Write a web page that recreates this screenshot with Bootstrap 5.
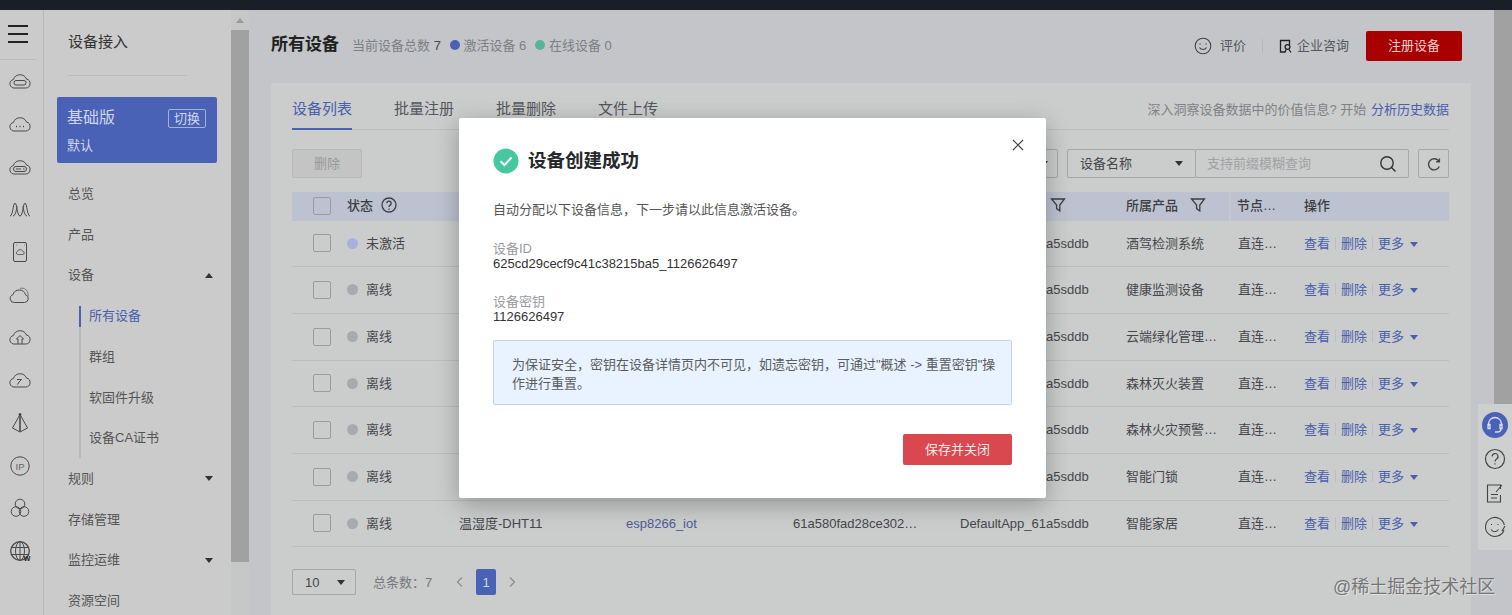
<!DOCTYPE html>
<html lang="zh-CN">
<head>
<meta charset="UTF-8">
<title>所有设备</title>
<link href="https://cdn.jsdelivr.net/npm/bootstrap@5.3.3/dist/css/bootstrap.min.css" rel="stylesheet">
<style>
html, body { height: 615px; overflow: hidden; }
body { font-family: "Liberation Sans", "Noto Sans CJK SC", sans-serif; font-size: 13px; color: #3a3c40; background: #c3c5c9; }
a { text-decoration: none; }
.top-strip { height: 10px; background: #1a1e29; }
.shell { height: 605px; }

/* icon rail */
.rail { width: 44px; flex: none; background: #cbcbcb; border-right: 1px solid #b6b6b6; }
.rail-menu { height: 50px; margin-right: 7px; border-bottom: 1px solid #bcbcbc; padding: 15px 0 0 8px; }
.rail-menu span { display: block; width: 20px; height: 2px; background: #222; margin-bottom: 6px; }
.rail-item { height: 42.7px; padding-left: 9px; display: flex; align-items: center; }
.rail-item svg { width: 22px; height: 22px; fill: none; stroke: #4a4a4a; stroke-width: 1; }

/* second menu */
.side { width: 187px; flex: none; background: #cbcbcb; padding: 0 14px 0 13px; }
.side-title { height: 66px; margin: 0 30px 0 11px; padding-top: 21px; font-size: 15px; color: #333; border-bottom: 1px solid #bdbdbd; line-height: 22px; }
.plan-box { height: 66px; margin-top: 21px; background: #4a62b6; border-radius: 2px; color: #cfd6ec; padding: 10px 11px 10px 10px; }
.plan-name { font-size: 16px; line-height: 22px; }
.plan-switch { border: 1px solid #a3afdc; border-radius: 2px; font-size: 13px; line-height: 17px; padding: 0 5px; }
.plan-sub { margin-top: 8px; line-height: 18px; }
.side-nav { margin-top: 10.5px; }
.side-link { height: 40.7px; padding-left: 11px; padding-right: 4px; display: flex; align-items: center; justify-content: space-between; color: #555; }
.side-sub { margin-left: 22px; border-left: 2px solid #b9b9b9; }
.side-sub .side-link { padding-left: 8px; height: 40.7px; margin-left: -2px; border-left: 2px solid transparent; }
.side-sub .side-link.is-on { height: 21px; margin-top: 10px; margin-bottom: 9.7px; color: #4a5fae; border-left-color: #4a62b6; }
.caret-up, .caret-down { width: 0; height: 0; border-left: 4.5px solid transparent; border-right: 4.5px solid transparent; }
.caret-up { border-bottom: 5px solid #333; }
.caret-down { border-top: 5px solid #333; }
.bar-track { width: 18px; flex: none; background: #c6c7c7; }
.bar-top { height: 20px; display: flex; align-items: center; justify-content: center; }
.bar-top i { width: 0; height: 0; border-left: 4px solid transparent; border-right: 4px solid transparent; border-bottom: 5px solid #999; }
.bar-thumb { height: 532px; background: #a1a1a1; }

/* content */
.main-wrap { flex: 1; min-width: 0; padding: 0 23px 0 22px; }
.page-head { height: 73px; padding-bottom: 2px; }
.page-title { font-size: 17px; font-weight: 700; color: #222; margin: 0; }
.page-stat { color: #7d7f84; margin-left: 13px; }
.page-stat + .page-stat { margin-left: 9px; }
.page-stat b { font-weight: 400; color: #45474b; }
.dot { display: inline-block; width: 10px; height: 10px; border-radius: 50%; }
.dot-blue { background: #4a62b6; }
.dot-green { background: #57b496; }
.head-tool { color: #55575b; }
.head-sep { width: 1px; height: 14px; background: #b4b6ba; margin: 0 16px; }
.btn-reg { width: 96px; height: 30px; margin-left: 17px; margin-right: 9px; padding: 0; font-size: 13px; color: #e3cfcf; background: #a80000; border: 0; border-radius: 2px; }
.panel-box { width: 1200px; height: 532px; background: #cbcccc; padding: 0 22px 0 21px; }
.tab-row { height: 47px; border-bottom: 1px solid #bcbdbe; }
.tab-row .nav-link { padding: 0; margin-right: 42px; height: 47px; line-height: 51px; font-size: 15px; color: #55575b; border-bottom: 2px solid transparent; }
.tab-row .nav-link.active { color: #4a5fae; border-bottom-color: #4a62b6; }
.tab-hint { color: #808285; padding-top: 17px; }
.tab-hint a { color: #4a5fae; margin-left: 1px; }
.tool-row { margin-top: 19px; height: 29px; }
.btn-off { --bs-btn-disabled-bg: #c4c4c4; --bs-btn-disabled-border-color: #b8b8b8; --bs-btn-disabled-color: #999; --bs-btn-disabled-opacity: 1; width: 70px; height: 29px; padding: 0; font-size: 13px; border-radius: 2px; }
.pick-box { height: 29px; border: 1px solid #a7a7a7; border-radius: 2px; padding: 0 12px; display: flex; align-items: center; justify-content: space-between; color: #45474b; background: transparent; }
.pick-back { width: 80px; margin-right: 9px; padding-right: 9px; }
.pick-name { width: 129px; }
.search-box { width: 214px; height: 29px; margin-left: -1px; border: 1px solid #a7a7a7; border-radius: 2px; padding: 0 11px; display: flex; align-items: center; justify-content: space-between; color: #a1a2a3; }
.search-box svg { width: 18px; height: 18px; fill: none; stroke: #333; stroke-width: 1.4; }
.btn-reload { width: 31px; height: 29px; margin-left: 9px; padding: 0; border: 1px solid #a7a7a7; border-radius: 2px; background: transparent; display: flex; align-items: center; justify-content: center; }
.btn-reload svg { width: 14px; height: 14px; fill: none; stroke: #444; stroke-width: 1.4; }

.dev-table { table-layout: fixed; width: 1157px; margin: 14px 0 0; --bs-table-bg: transparent; --bs-table-color: #45474b; font-size: 13px; }
.dev-table th { height: 28px; padding: 0 12px 0 8px; background: #bcc2cf; font-weight: 500; color: #3c3e42; border-bottom: 1px solid #c0c1c3; vertical-align: middle; white-space: nowrap; }
.dev-table td { height: 46.7px; padding: 0 12px 0 8px; border-bottom: 1px solid #bcbdbe; vertical-align: middle; }
.dev-table th.gap-left { border-left: 2px solid #c5c8ce; padding-left: 6px; }
.check-box { display: block; width: 18px; height: 18px; margin-left: 13px; border: 1px solid #9c9c9c; border-radius: 2px; }
.state-dot { display: inline-block; width: 11px; height: 11px; border-radius: 50%; background: #a8aaae; margin-right: 8px; vertical-align: -1px; }
.state-new { background: #a7b1dd; }
.th-icon { width: 16px; height: 16px; fill: none; stroke: #3c3e42; stroke-width: 1.3; margin-left: 8px; vertical-align: -3px; }
.filter-icon { margin-left: 12px; }
.dev-link { color: #4f5a94; }
.op-links { white-space: nowrap; color: #4a5fae; }
.op-sep { display: inline-block; width: 1px; height: 12px; background: #bcbdc2; margin: 0 5px; vertical-align: -1px; }
.caret-blue { display: inline-block; margin-left: 6px; width: 0; height: 0; border-left: 4.5px solid transparent; border-right: 4.5px solid transparent; border-top: 5px solid #4a5fae; vertical-align: 1px; }
.pager-row { margin-top: 22px; }
.pager-size { width: 64px; height: 26px; border: 1px solid #a7a7a7; border-radius: 2px; padding: 0 10px 0 12px; display: flex; align-items: center; justify-content: space-between; color: #45474b; }
.pager-total { margin-left: 17px; color: #77797c; width: 81px; }
.pager-row svg { width: 12px; height: 12px; fill: none; stroke: #8a8c90; stroke-width: 1.2; }
.pager-now { width: 20px; height: 26px; margin: 0 10px; border-radius: 2px; background: #4a62b6; color: #cfd6ec; display: flex; align-items: center; justify-content: center; }
.side-scroll { width: 18px; flex: none; }
.side-scroll div { height: 394px; background: #a1a1a1; }

/* over the page */
.dialog-box { position: absolute; left: 459px; top: 118px; width: 587px; height: 380px; padding: 30px 34px 0; border: 0; border-radius: 2px; box-shadow: 0 6px 24px rgba(0,0,0,.28); background: #fff; color: #555; z-index: 5; }
.dialog-close { position: absolute; right: 21px; top: 20px; width: 14px; height: 14px; padding: 0; border: 0; background: none; display: flex; }
.dialog-close svg { width: 14px; height: 14px; stroke: #444; stroke-width: 1.2; fill: none; }
.dialog-head { height: 26px; }
.dialog-head svg { width: 26px; height: 26px; margin-right: 9px; }
.dialog-title { font-size: 18.5px; font-weight: 700; color: #26282c; margin: 0; }
.dialog-line { margin: 26px 0 0; line-height: 20px; }
.info-label { color: #9a9c9f; line-height: 15px; }
.info-val { color: #333; line-height: 15px; }
.info-block { margin-top: 21px; }
.info-block + .info-block { margin-top: 23px; }
.dialog-note { height: 65px; margin: 16px 0 0; padding: 14px 0 0 18px; line-height: 19px; color: #5a5c60; background: #e8f3ff; border: 1px solid #c9d3f1; border-radius: 2px; white-space: nowrap; }
.dialog-foot { margin-top: 29px; }
.btn-save { width: 109px; height: 31px; padding: 0; font-size: 13px; color: #fbe8e9; background: #d9474f; border: 0; border-radius: 2px; }
.help-float { position: absolute; left: 1478px; top: 404px; width: 34px; height: 146px; background: #cecfcf; padding-top: 8px; z-index: 3; }
.help-float svg { display: block; width: 26px; height: 26px; margin: 0 0 8px 4px; fill: none; stroke: #444; stroke-width: 1; }
.mark-text { position: absolute; left: 1333px; top: 575px; font-size: 18px; line-height: 24px; color: rgba(85,85,85,.75); text-shadow: 1px 1px 0 rgba(235,235,235,.7); white-space: nowrap; z-index: 2; }
</style>
</head>
<body>
<div class="top-strip"></div>
<div class="shell d-flex">
  <div class="rail">
    <div class="rail-menu"><span></span><span></span><span></span></div>
    <div class="rail-list">
      <div class="rail-item"><svg viewBox="0 0 22 22"><path d="M6 18h10.5a4.5 4.5 0 0 0 1-8.9A7 7 0 0 0 4.4 9.5 4.3 4.3 0 0 0 6 18z"/><rect x="5" y="10.5" width="12" height="4.5" rx="2"/></svg></div>
      <div class="rail-item"><svg viewBox="0 0 22 22"><path d="M6 18h10.5a4.5 4.5 0 0 0 1-8.9A7 7 0 0 0 4.4 9.5 4.3 4.3 0 0 0 6 18z"/><path d="M7 13.5h1M10.5 13.5h1M14 13.5h1" stroke-width="1.5"/></svg></div>
      <div class="rail-item"><svg viewBox="0 0 22 22"><path d="M6 18h10.5a4.5 4.5 0 0 0 1-8.9A7 7 0 0 0 4.4 9.5 4.3 4.3 0 0 0 6 18z"/><rect x="4.5" y="10.5" width="13" height="5" rx="2.5"/><path d="M7 13h5M14 13h1.5"/></svg></div>
      <div class="rail-item"><svg viewBox="0 0 22 22"><path d="M1 18c3 0 3-13 5-13s2 13 5 13 3-13 5-13 2 13 5 13M4 18c3 0 4-10 4-10M18 18c-3 0-4-10-4-10"/></svg></div>
      <div class="rail-item"><svg viewBox="0 0 22 22"><rect x="4.5" y="1.5" width="13" height="19" rx="1.5"/><path d="M8.5 13.5h5a1.6 1.6 0 0 0 .2-3.2 2.8 2.8 0 0 0-5.3.3 1.5 1.5 0 0 0 .1 2.9z" stroke-width=".8"/><path d="M7 4h.5M15 4h.5" stroke-width="1.2"/></svg></div>
      <div class="rail-item"><svg viewBox="0 0 22 22"><path d="M5.5 18.5h10a4 4 0 0 0 1-7.8A6.5 6.5 0 0 0 4 10.7a4 4 0 0 0 1.5 7.8z"/><path d="M11 4.5c4-1.5 9 2 8 8" stroke="#777"/></svg></div>
      <div class="rail-item"><svg viewBox="0 0 22 22"><path d="M6 18h10.5a4.5 4.5 0 0 0 1-8.9A7 7 0 0 0 4.4 9.5 4.3 4.3 0 0 0 6 18z"/><path d="M7.5 13l3.5-3.5 3.5 3.5M9 13v5M13 13v5M9 13H7.5M13 13h1.5"/></svg></div>
      <div class="rail-item"><svg viewBox="0 0 22 22"><path d="M6 18h10.5a4.5 4.5 0 0 0 1-8.9A7 7 0 0 0 4.4 9.5 4.3 4.3 0 0 0 6 18z"/><path d="M8 10.5h4.5L10 13M10 13l-1.5 2.5"/></svg></div>
      <div class="rail-item"><svg viewBox="0 0 22 22"><path d="M11 2.5L3.5 16 11 20l7.5-4z"/><path d="M11 2.5V20" stroke-width="1.6"/><circle cx="11" cy="2.5" r="1" fill="#333"/></svg></div>
      <div class="rail-item"><svg viewBox="0 0 22 22"><circle cx="11" cy="11" r="9.2"/><text x="11" y="14.5" text-anchor="middle" font-size="9.5" fill="#666" stroke="none" font-family="Liberation Sans">IP</text></svg></div>
      <div class="rail-item"><svg viewBox="0 0 22 22"><circle cx="11" cy="7" r="4.8"/><circle cx="7" cy="14.5" r="4.8"/><circle cx="15" cy="14.5" r="4.8"/></svg></div>
      <div class="rail-item"><svg viewBox="0 0 22 22"><circle cx="11" cy="11" r="9.3" stroke-width="1.3"/><ellipse cx="11" cy="11" rx="4.5" ry="9.3"/><path d="M11 1.7v18.6M2 7.5h18M2 14.5h18"/><text x="18" y="20.5" text-anchor="middle" font-size="7" font-weight="700" fill="#222" stroke="none" font-family="Liberation Sans">W</text></svg></div>
    </div>
  </div>

  <div class="side">
    <div class="side-title">设备接入</div>
    <div class="plan-box">
      <div class="d-flex justify-content-between align-items-center"><span class="plan-name">基础版</span><span class="plan-switch">切换</span></div>
      <div class="plan-sub">默认</div>
    </div>
    <div class="side-nav">
      <a class="side-link" href="#">总览</a>
      <a class="side-link" href="#">产品</a>
      <a class="side-link" href="#">设备<i class="caret-up"></i></a>
      <div class="side-sub">
        <a class="side-link is-on" href="#">所有设备</a>
        <a class="side-link" href="#">群组</a>
        <a class="side-link" href="#">软固件升级</a>
        <a class="side-link" href="#">设备CA证书</a>
      </div>
      <a class="side-link" href="#">规则<i class="caret-down"></i></a>
      <a class="side-link" href="#">存储管理</a>
      <a class="side-link" href="#">监控运维<i class="caret-down"></i></a>
      <a class="side-link" href="#">资源空间</a>
    </div>
  </div>
  <div class="bar-track"><div class="bar-top"><i></i></div><div class="bar-thumb"></div></div>

  <div class="main-wrap">
    <div class="page-head d-flex align-items-center justify-content-between">
      <div class="d-flex align-items-center">
        <h1 class="page-title">所有设备</h1>
        <span class="page-stat">当前设备总数 <b>7</b></span>
        <span class="page-stat"><i class="dot dot-blue"></i> 激活设备 6</span>
        <span class="page-stat"><i class="dot dot-green"></i> 在线设备 0</span>
      </div>
      <div class="d-flex align-items-center head-tool">
        <svg width="18" height="18" viewBox="0 0 18 18" fill="none" stroke="#444" stroke-width="1.1" class="me-2"><circle cx="9" cy="9" r="7.8"/><path d="M5.5 10.5c1.5 2.6 5.5 2.6 7 0"/><path d="M6 6.5v1M12 6.5v1" stroke-width="1.4"/></svg>
        <span>评价</span>
        <i class="head-sep"></i>
        <svg width="14" height="14" viewBox="0 0 14 14" fill="none" stroke="#222" stroke-width="1.3" class="me-1"><path d="M6 13H1.5V1.5h9V6"/><circle cx="8.5" cy="8" r="2.4"/><path d="M7 10.5L6 13.5M10 10.5l2 3"/></svg>
        <span>企业咨询</span>
        <button class="btn btn-reg" type="button">注册设备</button>
      </div>
    </div>

    <div class="panel-box">
      <div class="tab-row d-flex justify-content-between">
        <ul class="nav">
          <li class="nav-item"><a class="nav-link active" href="#">设备列表</a></li>
          <li class="nav-item"><a class="nav-link" href="#">批量注册</a></li>
          <li class="nav-item"><a class="nav-link" href="#">批量删除</a></li>
          <li class="nav-item"><a class="nav-link" href="#">文件上传</a></li>
        </ul>
        <div class="tab-hint">深入洞察设备数据中的价值信息? 开始 <a href="#">分析历史数据</a></div>
      </div>

      <div class="tool-row d-flex justify-content-between">
        <button class="btn btn-off" type="button" disabled>删除</button>
        <div class="d-flex">
          <div class="pick-box pick-back"><span></span><i class="caret-down"></i></div>
          <div class="pick-box pick-name"><span>设备名称</span><i class="caret-down"></i></div>
          <div class="search-box"><span>支持前缀模糊查询</span><svg viewBox="0 0 18 18"><circle cx="8" cy="8" r="6.2"/><path d="M12.5 12.5l4 4"/></svg></div>
          <button class="btn btn-reload" type="button"><svg viewBox="0 0 14 14"><path d="M12 4.5A5.6 5.6 0 1 0 12.3 9.5M12.4 1.5v3.3H9.2"/></svg></button>
        </div>
      </div>

      <table class="table dev-table">
        <colgroup><col style="width:47px"><col style="width:112px"><col style="width:167px"><col style="width:167px"><col style="width:167px"><col style="width:166px"><col style="width:112px"><col style="width:66px"><col style="width:153px"></colgroup>
        <thead>
          <tr>
            <th><span class="check-box"></span></th>
            <th>状态<svg class="th-icon" viewBox="0 0 16 16"><circle cx="8" cy="8" r="7"/><path d="M5.8 6.2a2.2 2.2 0 1 1 3.4 1.9c-.8.5-1.2 1-1.2 1.9M8 11.6v1.2"/></svg></th>
            <th></th><th></th><th></th>
            <th>所属资源空间<svg class="th-icon filter-icon" viewBox="0 0 16 16"><path d="M1.5 2h13L9.8 8v6l-3.2-2.4V8z"/></svg></th>
            <th>所属产品<svg class="th-icon filter-icon" viewBox="0 0 16 16"><path d="M1.5 2h13L9.8 8v6l-3.2-2.4V8z"/></svg></th>
            <th class="gap-left text-truncate">节点类型</th>
            <th>操作</th>
          </tr>
        </thead>
        <tbody>
          <tr><td><span class="check-box"></span></td><td><i class="state-dot state-new"></i>未激活</td><td></td><td></td><td></td><td>DefaultApp_61a5sddb</td><td class="text-truncate">酒驾检测系统</td><td class="text-truncate">直连设备</td><td class="op-links">查看<i class="op-sep"></i>删除<i class="op-sep"></i>更多<i class="caret-blue"></i></td></tr>
          <tr><td><span class="check-box"></span></td><td><i class="state-dot"></i>离线</td><td></td><td></td><td></td><td>DefaultApp_61a5sddb</td><td class="text-truncate">健康监测设备</td><td class="text-truncate">直连设备</td><td class="op-links">查看<i class="op-sep"></i>删除<i class="op-sep"></i>更多<i class="caret-blue"></i></td></tr>
          <tr><td><span class="check-box"></span></td><td><i class="state-dot"></i>离线</td><td></td><td></td><td></td><td>DefaultApp_61a5sddb</td><td class="text-truncate">云端绿化管理系统</td><td class="text-truncate">直连设备</td><td class="op-links">查看<i class="op-sep"></i>删除<i class="op-sep"></i>更多<i class="caret-blue"></i></td></tr>
          <tr><td><span class="check-box"></span></td><td><i class="state-dot"></i>离线</td><td></td><td></td><td></td><td>DefaultApp_61a5sddb</td><td class="text-truncate">森林灭火装置</td><td class="text-truncate">直连设备</td><td class="op-links">查看<i class="op-sep"></i>删除<i class="op-sep"></i>更多<i class="caret-blue"></i></td></tr>
          <tr><td><span class="check-box"></span></td><td><i class="state-dot"></i>离线</td><td></td><td></td><td></td><td>DefaultApp_61a5sddb</td><td class="text-truncate">森林火灾预警系统</td><td class="text-truncate">直连设备</td><td class="op-links">查看<i class="op-sep"></i>删除<i class="op-sep"></i>更多<i class="caret-blue"></i></td></tr>
          <tr><td><span class="check-box"></span></td><td><i class="state-dot"></i>离线</td><td></td><td></td><td></td><td>DefaultApp_61a5sddb</td><td class="text-truncate">智能门锁</td><td class="text-truncate">直连设备</td><td class="op-links">查看<i class="op-sep"></i>删除<i class="op-sep"></i>更多<i class="caret-blue"></i></td></tr>
          <tr><td><span class="check-box"></span></td><td><i class="state-dot"></i>离线</td><td>温湿度-DHT11</td><td><a class="dev-link" href="#">esp8266_iot</a></td><td>61a580fad28ce302…</td><td>DefaultApp_61a5sddb</td><td class="text-truncate">智能家居</td><td class="text-truncate">直连设备</td><td class="op-links">查看<i class="op-sep"></i>删除<i class="op-sep"></i>更多<i class="caret-blue"></i></td></tr>
        </tbody>
      </table>

      <div class="pager-row d-flex align-items-center">
        <div class="pager-size"><span>10</span><i class="caret-down"></i></div>
        <span class="pager-total">总条数：7</span>
        <svg viewBox="0 0 12 12"><path d="M8 1.5L3.5 6 8 10.5"/></svg>
        <span class="pager-now">1</span>
        <svg viewBox="0 0 12 12"><path d="M4 1.5L8.5 6 4 10.5"/></svg>
      </div>
    </div>
  </div>
  <div class="side-scroll"><div></div></div>
</div>

<div class="modal-content dialog-box">
  <button class="dialog-close" type="button" aria-label="关闭"><svg viewBox="0 0 14 14"><path d="M2 2l10 10M12 2L2 12"/></svg></button>
  <div class="dialog-head d-flex align-items-center">
    <svg viewBox="0 0 26 26"><circle cx="13" cy="13" r="12.5" fill="#45c8a0"/><path d="M7.5 13.2l4 3.8 7-7.5" fill="none" stroke="#fff" stroke-width="2"/></svg>
    <h2 class="dialog-title">设备创建成功</h2>
  </div>
  <p class="dialog-line">自动分配以下设备信息，下一步请以此信息激活设备。</p>
  <div class="info-block"><div class="info-label">设备ID</div><div class="info-val">625cd29cecf9c41c38215ba5_1126626497</div></div>
  <div class="info-block"><div class="info-label">设备密钥</div><div class="info-val">1126626497</div></div>
  <div class="alert dialog-note" role="alert">为保证安全，密钥在设备详情页内不可见，如遗忘密钥，可通过"概述 -&gt; 重置密钥"操<br>作进行重置。</div>
  <div class="dialog-foot d-flex justify-content-end"><button class="btn btn-save" type="button">保存并关闭</button></div>
</div>

<div class="help-float">
  <svg viewBox="0 0 26 26"><circle cx="13" cy="13" r="13" fill="#4a62b6" stroke="none"/><path d="M6.5 14v-2a6.5 6.5 0 0 1 13 0v2M6 12.5h2v4H6zM18 12.5h2v4h-2zM19 17c0 2-2 3-4 3h-2" stroke="#dbe0f2" stroke-width="1.3"/></svg>
  <svg viewBox="0 0 26 26"><circle cx="13" cy="13" r="9.5" stroke-width="1.2"/><path d="M10.2 10.5a2.9 2.9 0 1 1 4.4 2.4c-1 .7-1.6 1.2-1.6 2.5M13 17.2v1.4" stroke-width="1.2"/></svg>
  <svg viewBox="0 0 26 26"><path d="M18.5 9V5h-13v17h13v-7" stroke-width="1.1"/><path d="M9 14.5h7M9 18h6M14 12l6-7" stroke-width="1.1"/></svg>
  <svg viewBox="0 0 26 26"><path d="M22 16a9.5 9.5 0 1 1 .3-5" stroke-width="1.1"/><path d="M9 15.5c2 3 5.5 3 7.5 0M9.5 10v1M16 10v1M20 17l3-5" stroke-width="1.1"/></svg>
</div>
<div class="mark-text">@稀土掘金技术社区</div>
<script src="https://cdn.jsdelivr.net/npm/bootstrap@5.3.3/dist/js/bootstrap.bundle.min.js"></script>
</body>
</html>
